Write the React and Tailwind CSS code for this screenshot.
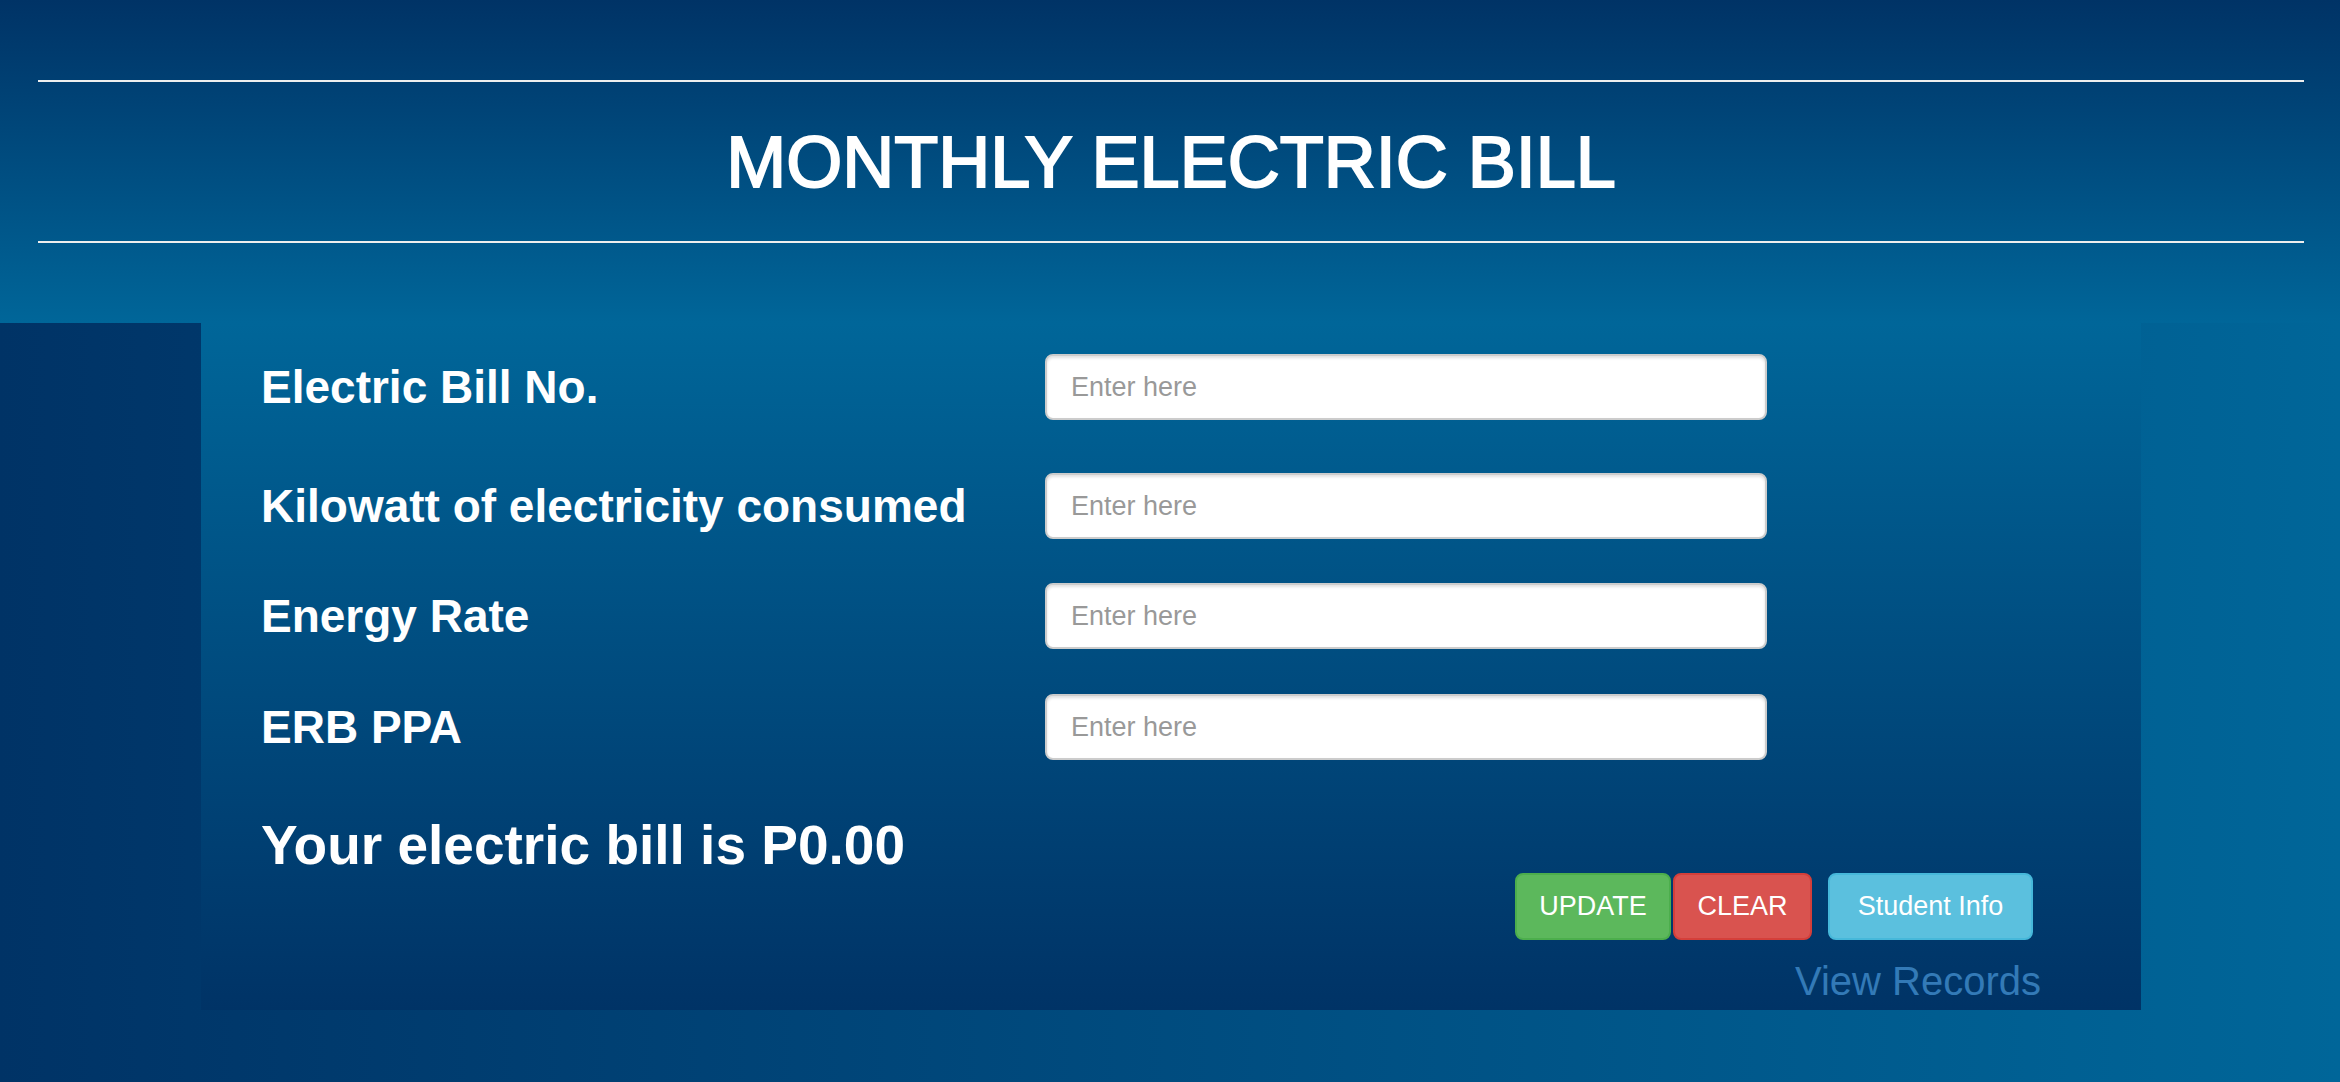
const fieldLabel = 'text-[46px] font-bold leading-none text-white'

const inputClasses =
  'h-[66px] w-[722px] rounded-[8px] border-2 border-[#ccc] bg-white px-[24px] text-[27px] text-[#555] ' +
  'shadow-[inset_0_2px_3px_rgba(0,0,0,0.12)] outline-none placeholder:text-[#999]'

const btnBase =
  'flex h-[67px] items-center justify-center rounded-[8px] border-2 text-[27px] leading-none text-white'

const fields = [
  { label: 'Electric Bill No.', gap: 'mb-[53px]' },
  { label: 'Kilowatt of electricity consumed', gap: 'mb-[44px]' },
  { label: 'Energy Rate', gap: 'mb-[45px]' },
  { label: 'ERB PPA', gap: '' },
]

export default function App() {
  return (
    <div className="min-h-screen w-full bg-gradient-to-r from-[#003366] to-[#006699] font-['Liberation_Sans',Arial,sans-serif]">
      <header className="h-[323px] bg-gradient-to-b from-[#003366] to-[#006699] pl-[38px] pr-[36px] pt-[80px]">
        <hr className="border-0 border-t-2 border-[#eee]" />
        <h1 className="flex h-[159px] items-center justify-center text-[72px] leading-none text-white [-webkit-text-stroke:2px_white]">
          MONTHLY ELECTRIC BILL
        </h1>
        <hr className="border-0 border-t-2 border-[#eee]" />
      </header>

      <main className="ml-[201px] h-[687px] w-[1940px] bg-gradient-to-b from-[#006699] to-[#003366] pl-[60px] pr-[100px] pt-[31px]">
        {fields.map((f) => (
          <div key={f.label} className={`flex items-center ${f.gap}`}>
            <label className={`w-[784px] ${fieldLabel}`}>{f.label}</label>
            <input type="text" placeholder="Enter here" className={inputClasses} />
          </div>
        ))}

        <h2 className="mt-[58px] text-[55px] font-bold leading-none text-white">Your electric bill is P0.00</h2>

        <div className="flex justify-end pr-[8px]">
          <button type="button" className={`${btnBase} w-[156px] border-[#4cae4c] bg-[#5cb85c]`}>
            UPDATE
          </button>
          <button type="button" className={`${btnBase} ml-[2px] w-[139px] border-[#d43f3a] bg-[#d9534f]`}>
            CLEAR
          </button>
          <button type="button" className={`${btnBase} ml-[16px] w-[205px] border-[#46b8da] bg-[#5bc0de]`}>
            Student Info
          </button>
        </div>

        <div className="mt-[21px] flex justify-end">
          <a href="#" className="text-[40px] leading-none text-[#337ab7]">
            View Records
          </a>
        </div>
      </main>
      <div className="h-[72px]" />
    </div>
  )
}
